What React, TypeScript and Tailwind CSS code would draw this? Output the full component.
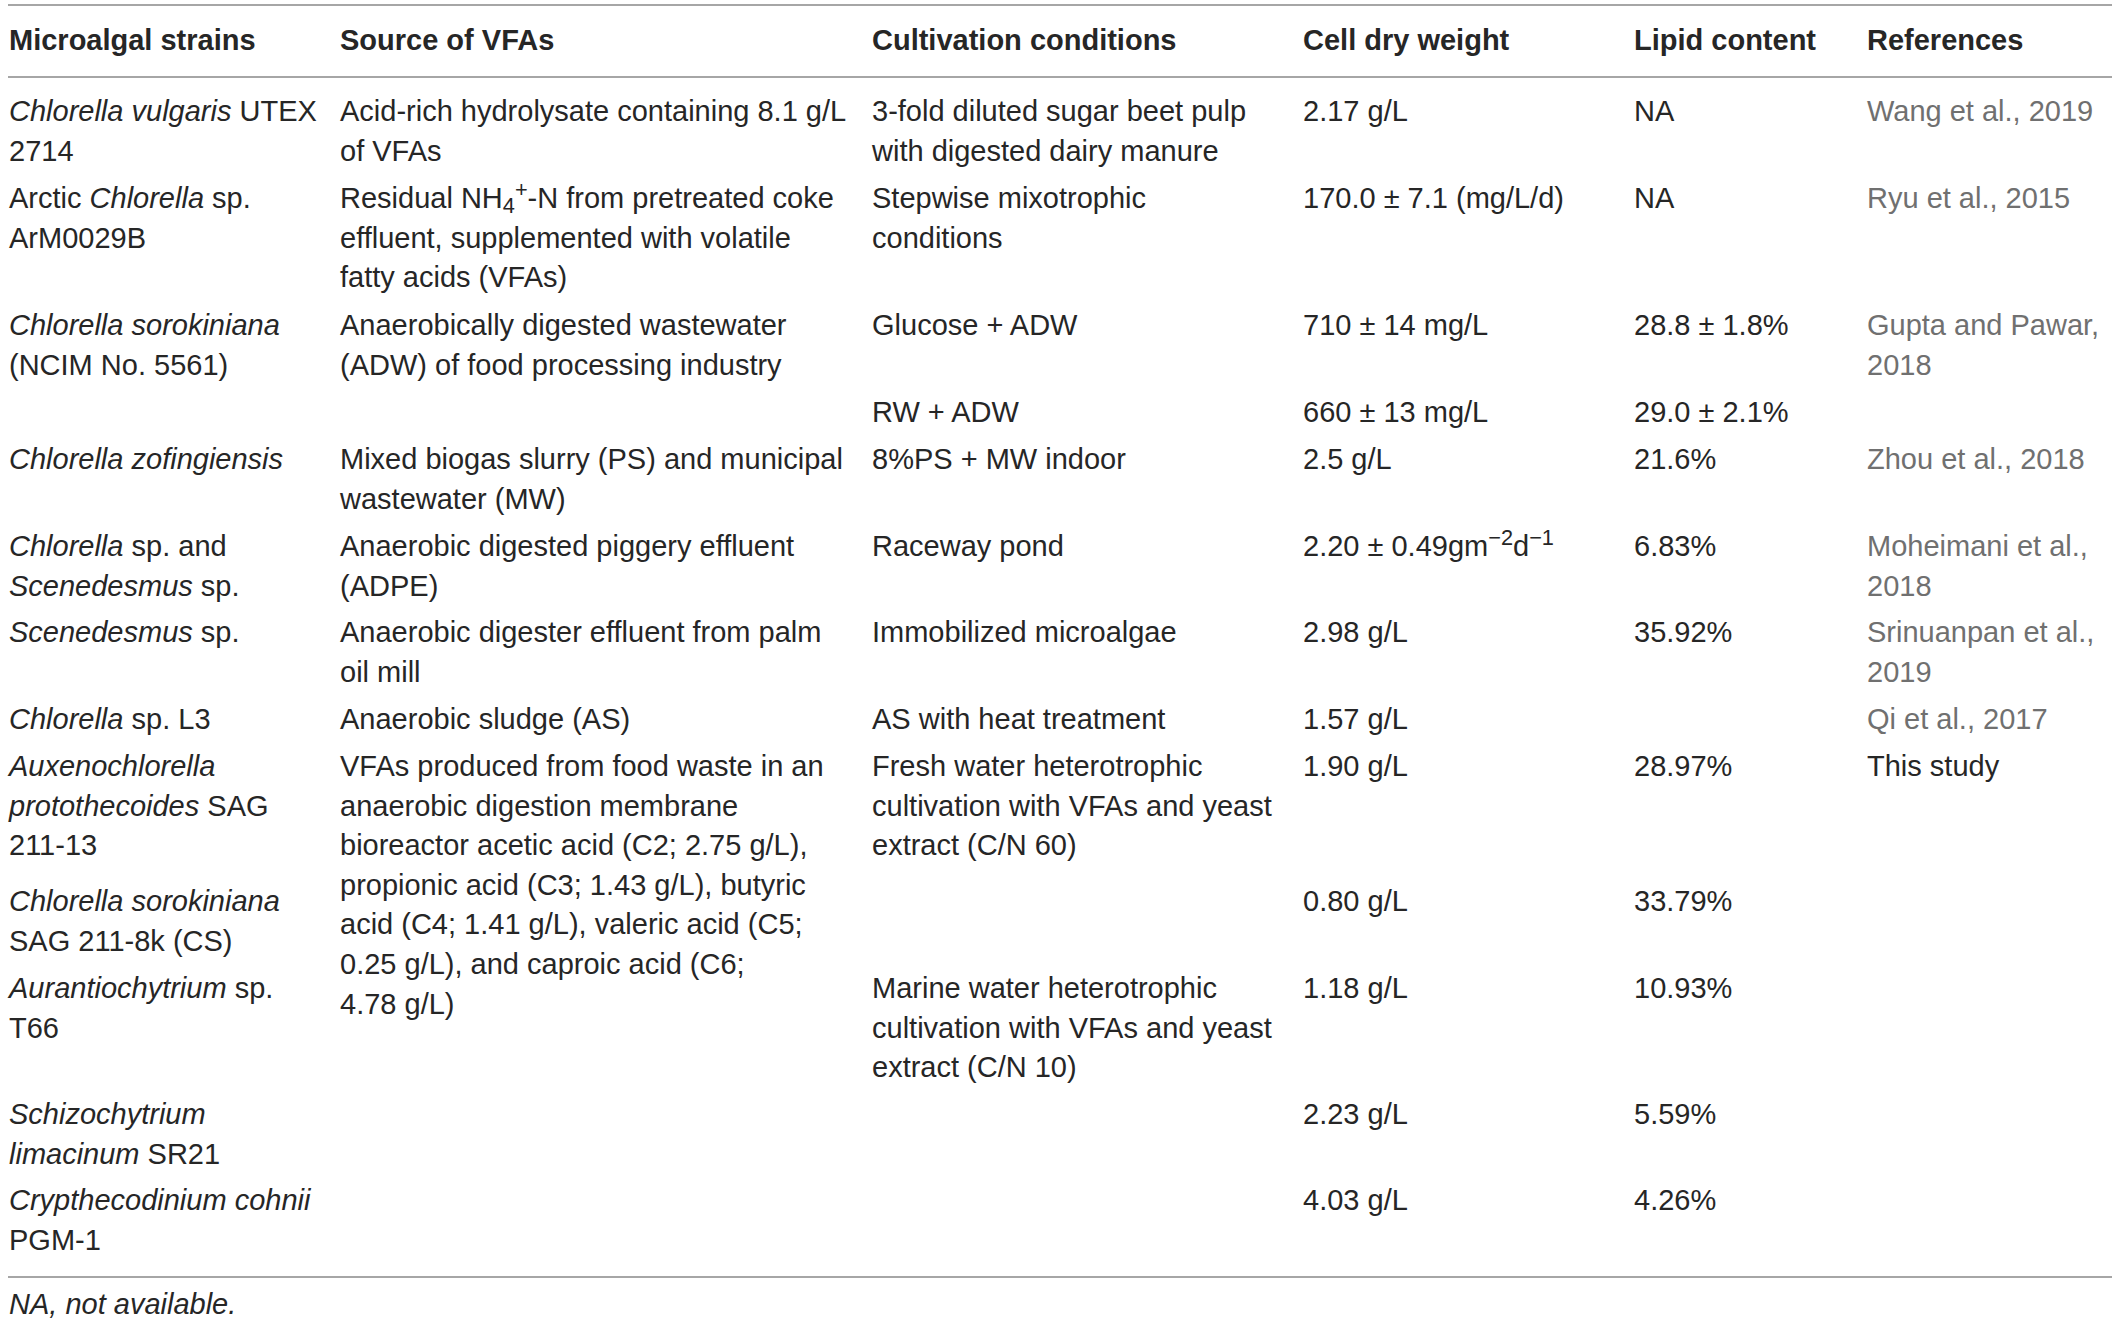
import React from "react";

const font = { fontFamily: '"Liberation Sans", Arial, Helvetica, sans-serif' };

function Ref({ children }: { children: React.ReactNode }) {
  return <span className="text-[#707070]">{children}</span>;
}

const td = "align-top whitespace-nowrap p-0 pt-[4px]";
const first = "align-top whitespace-nowrap p-0 pt-[14px]";

export default function App() {
  return (
    <div className="min-h-screen bg-white text-[#262626] text-[29px] leading-[39.6px]" style={font}>
      <div className="ml-[8px] mt-[4px] w-[2104px] border-t-2 border-b-2 border-[#a6a6a6]">
        <table className="w-full table-fixed border-separate border-spacing-0">
          <colgroup>
            <col className="w-[331px]" />
            <col className="w-[532px]" />
            <col className="w-[431px]" />
            <col className="w-[331px]" />
            <col className="w-[233px]" />
            <col className="w-[246px]" />
          </colgroup>
          <thead>
            <tr className="h-[72px]">
              {["Microalgal strains", "Source of VFAs", "Cultivation conditions", "Cell dry weight", "Lipid content", "References"].map((h) => (
                <th key={h} className="border-b-2 border-[#a6a6a6] p-0 pl-[1px] text-left align-middle font-bold whitespace-nowrap">
                  {h}
                </th>
              ))}
            </tr>
          </thead>
          <tbody className="[&_td]:pl-[1px]">
            <tr className="h-[97px]">
              <td className={first}><i>Chlorella vulgaris</i> UTEX<br />2714</td>
              <td className={first}>Acid-rich hydrolysate containing 8.1 g/L<br />of VFAs</td>
              <td className={first}>3-fold diluted sugar beet pulp<br />with digested dairy manure</td>
              <td className={first}>2.17 g/L</td>
              <td className={first}>NA</td>
              <td className={first}><Ref>Wang et al., 2019</Ref></td>
            </tr>
            <tr className="h-[127px]">
              <td className={td}>Arctic <i>Chlorella</i> sp.<br />ArM0029B</td>
              <td className={td}>
                Residual NH<sub>4</sub><sup>+</sup>-N from pretreated coke<br />effluent, supplemented with volatile<br />fatty acids (VFAs)
              </td>
              <td className={td}>Stepwise mixotrophic<br />conditions</td>
              <td className={td}>170.0 ± 7.1 (mg/L/d)</td>
              <td className={td}>NA</td>
              <td className={td}><Ref>Ryu et al., 2015</Ref></td>
            </tr>
            <tr className="h-[87px]">
              <td className={td} rowSpan={2}><i>Chlorella sorokiniana</i><br />(NCIM No. 5561)</td>
              <td className={td} rowSpan={2}>Anaerobically digested wastewater<br />(ADW) of food processing industry</td>
              <td className={td}>Glucose + ADW</td>
              <td className={td}>710 ± 14 mg/L</td>
              <td className={td}>28.8 ± 1.8%</td>
              <td className={td} rowSpan={2}><Ref>Gupta and Pawar,<br />2018</Ref></td>
            </tr>
            <tr className="h-[47px]">
              <td className={td}>RW + ADW</td>
              <td className={td}>660 ± 13 mg/L</td>
              <td className={td}>29.0 ± 2.1%</td>
            </tr>
            <tr className="h-[87px]">
              <td className={td}><i>Chlorella zofingiensis</i></td>
              <td className={td}>Mixed biogas slurry (PS) and municipal<br />wastewater (MW)</td>
              <td className={td}>8%PS + MW indoor</td>
              <td className={td}>2.5 g/L</td>
              <td className={td}>21.6%</td>
              <td className={td}><Ref>Zhou et al., 2018</Ref></td>
            </tr>
            <tr className="h-[86px]">
              <td className={td}><i>Chlorella</i> sp. and<br /><i>Scenedesmus</i> sp.</td>
              <td className={td}>Anaerobic digested piggery effluent<br />(ADPE)</td>
              <td className={td}>Raceway pond</td>
              <td className={td}>2.20 ± 0.49gm<sup>−2</sup>d<sup>−1</sup></td>
              <td className={td}>6.83%</td>
              <td className={td}><Ref>Moheimani et al.,<br />2018</Ref></td>
            </tr>
            <tr className="h-[87px]">
              <td className={td}><i>Scenedesmus</i> sp.</td>
              <td className={td}>Anaerobic digester effluent from palm<br />oil mill</td>
              <td className={td}>Immobilized microalgae</td>
              <td className={td}>2.98 g/L</td>
              <td className={td}>35.92%</td>
              <td className={td}><Ref>Srinuanpan et al.,<br />2019</Ref></td>
            </tr>
            <tr className="h-[47px]">
              <td className={td}><i>Chlorella</i> sp. L3</td>
              <td className={td}>Anaerobic sludge (AS)</td>
              <td className={td}>AS with heat treatment</td>
              <td className={td}>1.57 g/L</td>
              <td className={td}></td>
              <td className={td}><Ref>Qi et al., 2017</Ref></td>
            </tr>
            <tr className="h-[135px]">
              <td className={td}><i>Auxenochlorella</i><br /><i>protothecoides</i> SAG<br />211-13</td>
              <td className={td} rowSpan={3}>
                VFAs produced from food waste in an<br />anaerobic digestion membrane<br />bioreactor acetic acid (C2; 2.75 g/L),<br />propionic acid (C3; 1.43 g/L), butyric<br />acid (C4; 1.41 g/L), valeric acid (C5;<br />0.25 g/L), and caproic acid (C6;<br />4.78 g/L)
              </td>
              <td className={td} rowSpan={2}>Fresh water heterotrophic<br />cultivation with VFAs and yeast<br />extract (C/N 60)</td>
              <td className={td}>1.90 g/L</td>
              <td className={td}>28.97%</td>
              <td className={td}>This study</td>
            </tr>
            <tr className="h-[87px]">
              <td className={td}><i>Chlorella sorokiniana</i><br />SAG 211-8k (CS)</td>
              <td className={td}>0.80 g/L</td>
              <td className={td}>33.79%</td>
              <td className={td}></td>
            </tr>
            <tr className="h-[126px]">
              <td className={td}><i>Aurantiochytrium</i> sp.<br />T66</td>
              <td className={td} rowSpan={3}>Marine water heterotrophic<br />cultivation with VFAs and yeast<br />extract (C/N 10)</td>
              <td className={td}>1.18 g/L</td>
              <td className={td}>10.93%</td>
              <td className={td}></td>
            </tr>
            <tr className="h-[86px]">
              <td className={td}><i>Schizochytrium</i><br /><i>limacinum</i> SR21</td>
              <td className={td}></td>
              <td className={td}>2.23 g/L</td>
              <td className={td}>5.59%</td>
              <td className={td}></td>
            </tr>
            <tr className="h-[99px]">
              <td className={td}><i>Crypthecodinium cohnii</i><br />PGM-1</td>
              <td className={td}></td>
              <td className={td}>4.03 g/L</td>
              <td className={td}>4.26%</td>
              <td className={td}></td>
            </tr>
          </tbody>
        </table>
      </div>
      <p className="ml-[9px] mt-[7px] italic">NA, not available.</p>
    </div>
  );
}
